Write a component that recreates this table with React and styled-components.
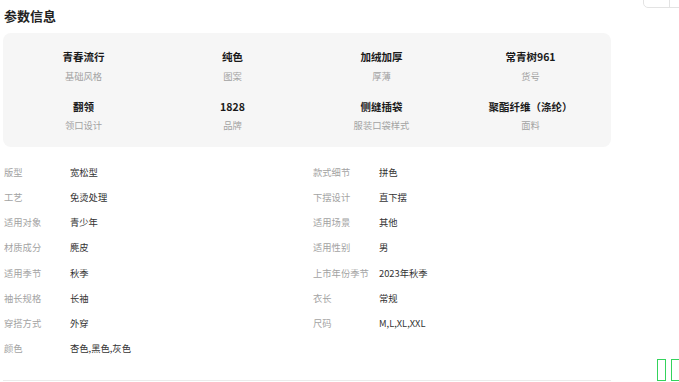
import React from "react";
import styled, { createGlobalStyle } from "styled-components";

const Global = createGlobalStyle`
  html, body { margin: 0; padding: 0; background: #fff; }
  body { font-family: "Noto Sans CJK SC", "Noto Sans", sans-serif; overflow: hidden; }
`;

const Page = styled.div`
  width: 608px;
  padding: 7px 0 0 3px;
  display: flex;
  flex-direction: column;
`;

const Title = styled.h2`
  margin: 0;
  padding-left: 1px;
  font-size: 13px;
  line-height: 18px;
  font-weight: 700;
  color: #222;
`;

const Panel = styled.div`
  margin-top: 8px;
  background: #f6f6f6;
  border-radius: 8px;
  padding: 16px 6px 15px;
  display: grid;
  grid-template-columns: repeat(4, 1fr);
  row-gap: 16.3px;
`;

const Attr = styled.div`
  display: flex;
  flex-direction: column;
  align-items: center;
  text-align: center;
`;

const AttrValue = styled.div`
  font-size: 10.5px;
  line-height: 16px;
  font-weight: 700;
  color: #1a1a1a;
  white-space: nowrap;
`;

const AttrLabel = styled.div`
  margin-top: 3.5px;
  font-size: 9.3px;
  line-height: 14px;
  color: #a3a3a3;
  white-space: nowrap;
`;

const List = styled.div`
  margin-top: 12px;
  padding-left: 1px;
  display: grid;
  grid-template-columns: 309px 1fr;
  grid-auto-rows: 25.2px;
`;

const Row = styled.div`
  display: flex;
  align-items: center;
  font-size: 9.3px;
  white-space: nowrap;
`;

const RowLabel = styled.span`
  width: 66px;
  flex: none;
  color: #a3a3a3;
`;

const RowValue = styled.span`
  color: #333;
`;

const Divider = styled.div`
  margin-top: 19px;
  height: 1px;
  background: #ebebeb;
`;

const CornerBox = styled.div`
  position: fixed;
  top: -20px;
  left: 643px;
  width: 60px;
  height: 26px;
  border: 1px solid #e3e3e3;
  border-radius: 5px;
  display: flex;
`;

const CornerCell = styled.div`
  width: 25px;
  border-right: 1px solid #e3e3e3;
`;

const Floater = styled.div`
  position: fixed;
  left: 657px;
  top: 359px;
  display: flex;
  gap: 4.5px;
`;

const Tofu = styled.span`
  display: block;
  box-sizing: border-box;
  width: 9px;
  height: 22px;
  border: 1.5px solid #34d35c;
`;

const attrs = [
  ["青春流行", "基础风格"],
  ["纯色", "图案"],
  ["加绒加厚", "厚薄"],
  ["常青树961", "货号"],
  ["翻领", "领口设计"],
  ["1828", "品牌"],
  ["侧缝插袋", "服装口袋样式"],
  ["聚酯纤维（涤纶）", "面料"],
];

const rows = [
  ["版型", "宽松型"],
  ["款式细节", "拼色"],
  ["工艺", "免烫处理"],
  ["下摆设计", "直下摆"],
  ["适用对象", "青少年"],
  ["适用场景", "其他"],
  ["材质成分", "麂皮"],
  ["适用性别", "男"],
  ["适用季节", "秋季"],
  ["上市年份季节", "2023年秋季"],
  ["袖长规格", "长袖"],
  ["衣长", "常规"],
  ["穿搭方式", "外穿"],
  ["尺码", "M,L,XL,XXL"],
  ["颜色", "杏色,黑色,灰色"],
];

export default function App() {
  return (
    <>
      <Global />
      <Page>
        <Title>参数信息</Title>
        <Panel>
          {attrs.map(([v, l]) => (
            <Attr key={l}>
              <AttrValue>{v}</AttrValue>
              <AttrLabel>{l}</AttrLabel>
            </Attr>
          ))}
        </Panel>
        <List>
          {rows.map(([l, v]) => (
            <Row key={l}>
              <RowLabel>{l}</RowLabel>
              <RowValue>{v}</RowValue>
            </Row>
          ))}
        </List>
        <Divider />
      </Page>
      <CornerBox>
        <CornerCell />
      </CornerBox>
      <Floater>
        <Tofu />
        <Tofu />
      </Floater>
    </>
  );
}
